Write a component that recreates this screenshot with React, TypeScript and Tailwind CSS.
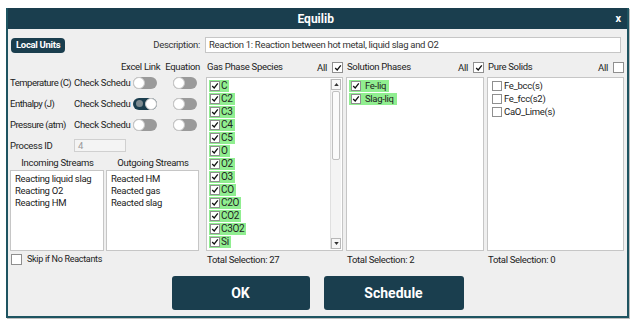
import React from 'react';

const gas = ['C', 'C2', 'C3', 'C4', 'C5', 'O', 'O2', 'O3', 'CO', 'C2O', 'CO2', 'C3O2', 'Si'];
const solutions = ['Fe-liq', 'Slag-liq'];
const solids = ['Fe_bcc(s)', 'Fe_fcc(s2)', 'CaO_Lime(s)'];

const Check = ({ on }: { on?: boolean }) => (
  <span className="flex h-[10px] w-[10px] shrink-0 items-center justify-center border border-[#8f8f8f] bg-white">
    {on && (
      <svg viewBox="0 0 10 10" className="h-[8px] w-[8px]">
        <path d="M1.5 5 L4 7.5 L8.5 1.8" fill="none" stroke="#111" strokeWidth={1.6} />
      </svg>
    )}
  </span>
);

const Toggle = ({ on }: { on?: boolean }) =>
  on ? (
    <span className="relative flex h-[12px] w-[24px] shrink-0 items-center rounded-full bg-[#1b3e4e]">
      <span className="ml-[3px] h-[7px] w-[7px] rounded-full bg-[#7c8a90]" />
      <span className="absolute right-0 h-[12px] w-[12px] rounded-full border border-[#c8c8c8] bg-white" />
    </span>
  ) : (
    <span className="relative flex h-[12px] w-[24px] shrink-0 items-center rounded-full bg-[#9a9a9a]">
      <span className="absolute left-0 h-[12px] w-[12px] rounded-full border border-[#c8c8c8] bg-white" />
    </span>
  );

const ColHeader = ({ title, all }: { title: string; all?: boolean }) => (
  <div className="flex h-[15px] items-start justify-between pl-[1px]">
    <span>{title}</span>
    <span className="flex items-center gap-[5px]">
      All
      <span className="flex h-[11px] w-[11px] items-center justify-center border border-[#8f8f8f] bg-white">
        {all && (
          <svg viewBox="0 0 10 10" className="h-[8px] w-[8px]">
            <path d="M1.5 5 L4 7.5 L8.5 1.8" fill="none" stroke="#111" strokeWidth={1.6} />
          </svg>
        )}
      </span>
    </span>
  </div>
);

const rows = [
  { label: 'Temperature (C)', on: false },
  { label: 'Enthalpy (J)', on: true },
  { label: 'Pressure (atm)', on: false },
];

export default function App() {
  return (
    <div className="h-[327px] w-[639px] bg-white pl-[6px] pt-[8px] text-[9.5px] leading-none tracking-[-0.3px] text-[#222]" style={{ fontFamily: 'Roboto, "Noto Sans", sans-serif' }}>
      <div className="h-[310px] w-[623px] border-2 border-t-0 border-[#1e5461] bg-[#efefef] shadow-[1px_1px_0_#bdbdbd]">
        <div className="flex h-[21px] items-center justify-center bg-[#1a3e4e] text-[12px] font-bold tracking-normal text-white">
          <span className="flex-1 pl-[8px] text-center">Equilib</span>
          <span className="pr-[6px] text-[11px]">x</span>
        </div>

        <div className="mt-[8px] flex h-[16px] items-center pl-[3px] pr-[6px]">
          <span className="flex h-[15px] items-center rounded-[4px] bg-[#1a3e4e] px-[5px] text-[9.5px] font-bold text-white">Local Units</span>
          <span className="ml-auto mr-[5px] text-[#333]">Description:</span>
          <div className="flex h-[16px] w-[416px] items-center border border-[#c6c6c6] bg-white px-[3px] text-[#333]">
            Reaction 1: Reaction between hot metal, liquid slag and O2
          </div>
        </div>

        <div className="mt-[9px] flex pl-[2px]">
          <div className="w-[190px]">
            <div className="flex h-[10px] items-start justify-end gap-[5px]">
              <span>Excel Link</span>
              <span>Equation</span>
            </div>
            {rows.map((r) => (
              <div key={r.label} className="flex h-[21px] items-center">
                <span className="w-[64px] whitespace-nowrap tracking-[-0.5px]">{r.label}</span>
                <span className="w-[59px] whitespace-nowrap">Check Schedu</span>
                <Toggle on={r.on} />
                <span className="w-[16px]" />
                <Toggle />
              </div>
            ))}
            <div className="flex h-[21px] items-center">
              <span className="w-[64px]">Process ID</span>
              <span className="flex h-[13px] w-[52px] items-center border border-[#d0d0d0] bg-[#f4f4f4] px-[3px] text-[#9a9a9a]">4</span>
            </div>
            <div className="flex h-[14px] items-center">
              <span className="w-[95px] text-center">Incoming Streams</span>
              <span className="ml-[1px] w-[94px] text-center">Outgoing Streams</span>
            </div>
            <div className="flex h-[81px] gap-[2px]">
              <div className="w-[94px] border border-[#c6c6c6] bg-white pl-[4px] pt-[3px]">
                {['Reacting liquid slag', 'Reacting O2', 'Reacting HM'].map((s) => (
                  <div key={s} className="h-[12px] whitespace-nowrap">{s}</div>
                ))}
              </div>
              <div className="w-[93px] border border-[#c6c6c6] bg-white pl-[4px] pt-[3px]">
                {['Reacted HM', 'Reacted gas', 'Reacted slag'].map((s) => (
                  <div key={s} className="h-[12px] whitespace-nowrap">{s}</div>
                ))}
              </div>
            </div>
            <div className="flex h-[17px] items-center gap-[5px] pl-[1px]">
              <span className="h-[11px] w-[11px] border border-[#8f8f8f] bg-white" />
              <span className="text-[9px]">Skip if No Reactants</span>
            </div>
          </div>

          <div className="ml-[6px] w-[137px]">
            <ColHeader title="Gas Phase Species" all />
            <div className="flex h-[174px] border border-[#c6c6c6] bg-white">
              <div className="flex-1 overflow-hidden pl-[2px] pt-[1px]">
                {gas.map((g) => (
                  <div key={g} className="flex h-[13px] items-center">
                    <span className="flex h-[12px] items-center gap-[1px] bg-[#90ee90] pl-[1px] pr-[2px] text-[10px]">
                      <Check on />
                      <span>{g}</span>
                    </span>
                  </div>
                ))}
              </div>
              <div className="my-[1px] mr-[1px] flex w-[11px] flex-col border-l border-[#e0e0e0] bg-[#f4f4f4]">
                <span className="flex h-[11px] items-center justify-center border border-[#b8b8b8] bg-[#f7f7f7]">
                  <svg viewBox="0 0 6 4" className="h-[3px] w-[5px]"><path d="M0 4 L3 0 L6 4 Z" fill="#333" /></svg>
                </span>
                <span className="mx-[1px] mt-[1px] h-[69px] rounded-[2px] border border-[#c0c0c0] bg-[#fbfbfb]" />
                <span className="flex-1" />
                <span className="flex h-[11px] items-center justify-center border border-[#b8b8b8] bg-[#f7f7f7]">
                  <svg viewBox="0 0 6 4" className="h-[3px] w-[5px]"><path d="M0 0 L3 4 L6 0 Z" fill="#333" /></svg>
                </span>
              </div>
            </div>
            <div className="flex h-[17px] items-center pl-[1px]">Total Selection: 27</div>
          </div>

          <div className="ml-[3px] w-[138px]">
            <ColHeader title="Solution Phases" all />
            <div className="h-[174px] border border-[#c6c6c6] bg-white pl-[2px] pt-[1px]">
              {solutions.map((s) => (
                <div key={s} className="flex h-[13px] items-center">
                  <span className="flex h-[12px] items-center gap-[4px] bg-[#90ee90] pl-[2px] pr-[3px]">
                    <Check on />
                    <span>{s}</span>
                  </span>
                </div>
              ))}
            </div>
            <div className="flex h-[17px] items-center pl-[1px]">Total Selection: 2</div>
          </div>

          <div className="ml-[3px] w-[137px]">
            <ColHeader title="Pure Solids" />
            <div className="h-[174px] border border-[#c6c6c6] bg-white pl-[4px] pt-[1px]">
              {solids.map((s) => (
                <div key={s} className="flex h-[13px] items-center gap-[2px]">
                  <Check />
                  <span>{s}</span>
                </div>
              ))}
            </div>
            <div className="flex h-[17px] items-center pl-[1px]">Total Selection: 0</div>
          </div>
        </div>

        <div className="mt-[8px] flex justify-center gap-[14px] tracking-normal">
          <button className="h-[34px] w-[138px] rounded-[3px] bg-[#1a3e4e] text-[14px] font-bold text-white">OK</button>
          <button className="h-[34px] w-[140px] rounded-[3px] bg-[#1a3e4e] text-[14px] font-bold text-white">Schedule</button>
        </div>
      </div>
    </div>
  );
}
